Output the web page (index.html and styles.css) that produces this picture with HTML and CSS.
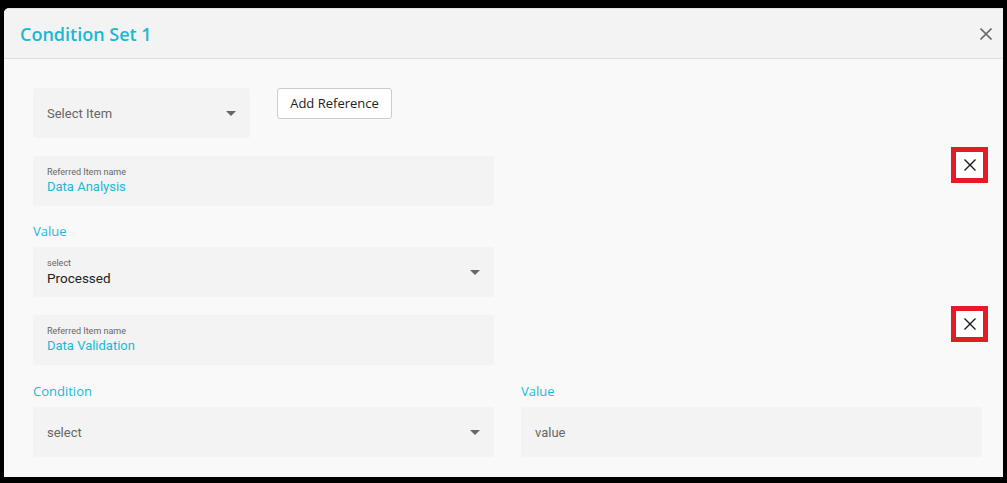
FILE: index.html
```html
<!DOCTYPE html>
<html lang="en">
<head>
    <meta charset="UTF-8">
    <meta name="viewport" content="width=device-width, initial-scale=1.0">
    <title>Condition Set 1</title>
    <link rel="stylesheet" href="styles.css">
</head>
<body>
  <div class="dialog">
    <!-- Header -->
    <div class="dialog-header">
        <h2>Condition Set 1</h2>
        <button class="close-btn" aria-label="Close">
            <svg width="12" height="12" viewBox="0 0 12 12"><path d="M0.5 0.5L11.5 11.5M11.5 0.5L0.5 11.5" stroke="#6b6b6b" stroke-width="1.6" fill="none"/></svg>
        </button>
    </div>

    <div class="dialog-body">
        <div class="top-row">
            <div class="field select-field short">
                <span class="placeholder">Select Item</span>
                <span class="caret"></span>
            </div>
            <button class="add-btn">Add Reference</button>
        </div>

        <!-- Reference 1 -->
        <div class="ref-row">
            <div class="field ref-field">
                <span class="mini-label">Referred Item name</span>
                <span class="ref-name">Data Analysis</span>
            </div>
            <button class="remove-btn" aria-label="Remove">
                <svg width="14" height="14" viewBox="0 0 14 14"><path d="M1.5 1.5L12.5 12.5M12.5 1.5L1.5 12.5" stroke="#1a1a1a" stroke-width="1.4" fill="none"/></svg>
            </button>
        </div>

        <label class="section-label">Value</label>
        <div class="field select-field wide">
            <div class="stack">
                <span class="mini-label">select</span>
                <span class="chosen">Processed</span>
            </div>
            <span class="caret"></span>
        </div>

        <!-- Reference 2 -->
        <div class="ref-row">
            <div class="field ref-field">
                <span class="mini-label">Referred Item name</span>
                <span class="ref-name">Data Validation</span>
            </div>
            <button class="remove-btn" aria-label="Remove">
                <svg width="14" height="14" viewBox="0 0 14 14"><path d="M1.5 1.5L12.5 12.5M12.5 1.5L1.5 12.5" stroke="#1a1a1a" stroke-width="1.4" fill="none"/></svg>
            </button>
        </div>

        <div class="cond-grid">
            <div>
                <label class="section-label">Condition</label>
                <div class="field select-field wide">
                    <span class="placeholder">select</span>
                    <span class="caret"></span>
                </div>
            </div>
            <div>
                <label class="section-label">Value</label>
                <div class="field wide">
                    <span class="placeholder">value</span>
                </div>
            </div>
        </div>
    </div>
  </div>
</body>
</html>
```

FILE: styles.css
```css
* {
    box-sizing: border-box;
}
body {
    margin: 0;
    padding: 8px 4px 6px 4px;
    background: #000;
    font-family: Roboto, "Liberation Sans", sans-serif;
}
.dialog {
    height: 469px;
    background: #f9f9f9;
    border-top: 1px solid #e2e2e2;
    border-radius: 5px 0 0 0;
    overflow: hidden;
}
.dialog-header {
    height: 50px;
    background: #f3f3f3;
    border-bottom: 1px solid #dedede;
    display: flex;
    align-items: center;
    justify-content: space-between;
    padding: 0 11px 0 16px;
}
.dialog-header h2 {
    margin: 0;
    font-family: "Open Sans", sans-serif;
    font-weight: 600;
    font-size: 18px;
    color: #1bb8d5;
}
.close-btn {
    border: none;
    background: none;
    padding: 0;
    width: 12px;
    height: 12px;
    display: flex;
}
.dialog-body {
    padding: 29px 15px 0 29px;
}
.top-row {
    display: flex;
    align-items: flex-start;
    gap: 27px;
}
.field {
    background: #f3f3f3;
    border-radius: 3px;
    height: 50px;
    display: flex;
    align-items: center;
    padding: 0 14px;
}
.short {
    width: 217px;
}
.wide {
    width: 461px;
}
.select-field {
    justify-content: space-between;
    padding-right: 14px;
}
.caret {
    width: 0;
    height: 0;
    border-left: 5px solid transparent;
    border-right: 5px solid transparent;
    border-top: 5px solid #666;
    margin-top: 1px;
}
.placeholder {
    font-size: 13px;
    color: #666;
}
.add-btn {
    height: 31px;
    width: 115px;
    background: #fff;
    border: 1px solid #ccc;
    border-radius: 3px;
    font-family: "Open Sans", sans-serif;
    font-size: 13px;
    color: #222;
    padding: 0 0 1px;
}
.ref-row {
    display: flex;
    justify-content: space-between;
    align-items: flex-start;
    margin-top: 9px;
}
.ref-field {
    width: 461px;
    margin-top: 9px;
    flex-direction: column;
    align-items: flex-start;
    justify-content: center;
    gap: 1px;
    padding-bottom: 1px;
}
.mini-label {
    font-size: 9px;
    color: #666;
    line-height: 11px;
}
.ref-name {
    font-size: 13px;
    color: #1bb8d5;
    line-height: 16px;
}
.stack {
    display: flex;
    flex-direction: column;
    gap: 1px;
}
.chosen {
    font-size: 13.5px;
    color: #222;
    line-height: 17px;
}
.remove-btn {
    width: 37px;
    height: 36px;
    border: 5px solid #e21c24;
    background: #fff;
    padding: 0;
    display: flex;
    align-items: center;
    justify-content: center;
}
.section-label {
    display: block;
    font-family: "Open Sans", sans-serif;
    font-size: 13px;
    color: #1bb8d5;
    line-height: 16px;
    margin: 17px 0 8px;
}
.cond-grid {
    display: grid;
    grid-template-columns: 461px 461px;
    gap: 27px;
}
.cond-grid .section-label {
    margin-top: 18px;
}
```
